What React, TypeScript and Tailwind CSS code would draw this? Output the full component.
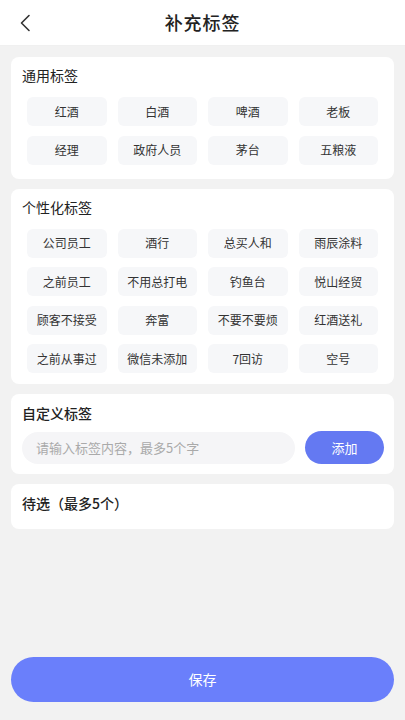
const commonTags = ['红酒', '白酒', '啤酒', '老板', '经理', '政府人员', '茅台', '五粮液'];

const personalTags = [
  '公司员工', '酒行', '总买人和', '雨辰涂料',
  '之前员工', '不用总打电', '钓鱼台', '悦山经贸',
  '顾客不接受', '奔富', '不要不要烦', '红酒送礼',
  '之前从事过', '微信未添加', '7回访', '空号',
];

function TagGrid({ tags }: { tags: string[] }) {
  return (
    <div className="grid grid-cols-4 gap-x-[11px] gap-y-[9.5px] px-4">
      {tags.map((tag) => (
        <div
          key={tag}
          className="h-[29px] rounded-md bg-[#f6f7f9] flex items-center justify-center text-[12px] text-[#333]"
        >
          {tag}
        </div>
      ))}
    </div>
  );
}

export default function App() {
  return (
    <div
      className="w-[405px] h-[720px] bg-[#f2f2f2] flex flex-col overflow-hidden"
      style={{ fontFamily: '"Noto Sans CJK SC", "Noto Sans", sans-serif' }}
    >
      {/* Header */}
      <div className="h-[46px] bg-white flex items-center relative shrink-0 border-b border-[#f0f0f0]">
        <button className="absolute left-[14px] top-[11px] w-[22px] h-[24px] flex items-center justify-center">
          <svg width="12" height="18" viewBox="0 0 12 18" fill="none">
            <path d="M10 1.5 L2.5 9 L10 16.5" stroke="#333" strokeWidth="1.6" strokeLinecap="round" strokeLinejoin="round" />
          </svg>
        </button>
        <h1 className="w-full text-center text-[18px] font-medium text-[#222] tracking-wider">补充标签</h1>
      </div>

      <div className="flex flex-col gap-[10px] px-[11px] pt-[11px]">
        {/* 通用标签 */}
        <div className="bg-white rounded-lg pt-[8px] pb-[14px]">
          <div className="px-[11px] text-[14px] text-[#222] mb-[11px]">通用标签</div>
          <TagGrid tags={commonTags} />
        </div>

        {/* 个性化标签 */}
        <div className="bg-white rounded-lg pt-[8px] pb-[11px]">
          <div className="px-[11px] text-[14px] text-[#222] mb-[11px]">个性化标签</div>
          <TagGrid tags={personalTags} />
        </div>

        {/* 自定义标签 */}
        <div className="bg-white rounded-lg pt-[9px] pb-[10px] px-[11px]">
          <div className="text-[14px] text-[#222] font-medium mb-[7px]">自定义标签</div>
          <div className="flex items-center gap-[10px]">
            <div className="flex-1 h-[32px] rounded-full bg-[#f5f5f7] flex items-center px-[14px] text-[13px] text-[#aaa]">
              请输入标签内容，最多5个字
            </div>
            <button className="w-[79px] h-[33px] rounded-full bg-[#6479f2] text-white text-[13px] mr-[-1px]">
              添加
            </button>
          </div>
        </div>

        {/* 待选 */}
        <div className="bg-white rounded-lg pt-[9px] h-[45px] px-[11px]">
          <div className="text-[14px] text-[#222] font-medium">待选（最多5个）</div>
        </div>
      </div>

      <div className="flex-1" />

      <div className="px-[11px] pb-[18px]">
        <button className="w-full h-[45px] rounded-full bg-[#6a7ffb] text-white text-[14px]">保存</button>
      </div>
    </div>
  );
}
